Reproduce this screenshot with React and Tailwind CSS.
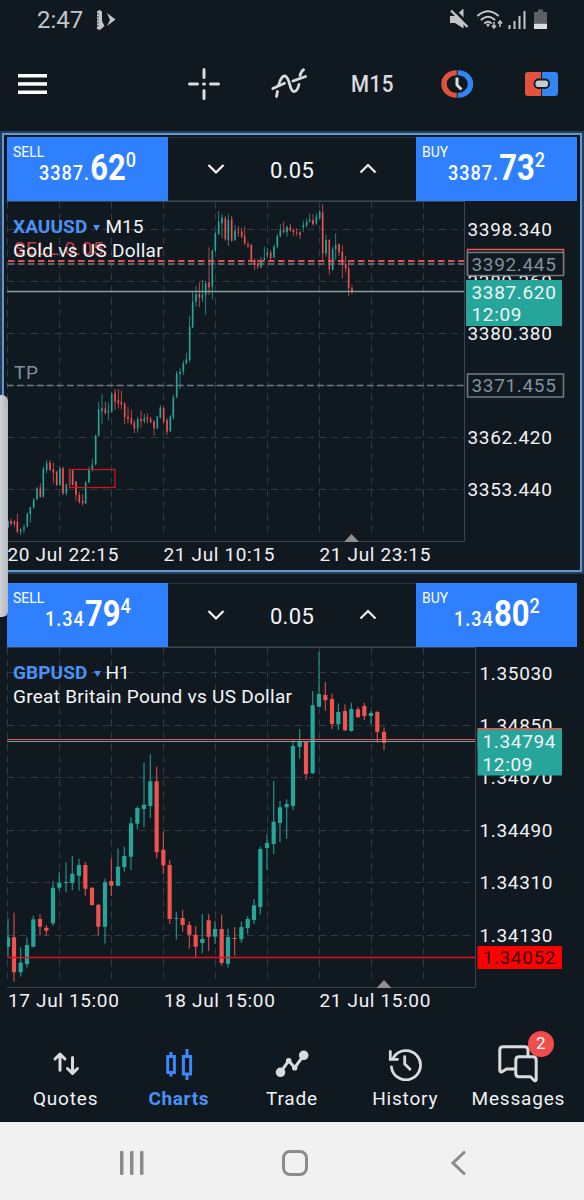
import React from 'react';

const UP = '#26a69a';
const DOWN = '#ef5350';

// Candle rows are [x, high, bodyTop, bodyBottom, low, direction], three units per pixel
const XAU_SEGMENTS = [
    {
        x: 0, y: 340,
        rows: [
            [24, 540, 543, 563, 563, 1], [33, 535, 543, 552, 557, 0], [43, 540, 545, 552, 560, 0], [52, 520, 546, 575, 580, 0],
            [62, 565, 568, 575, 585, 1], [72, 552, 562, 568, 580, 1], [82, 517, 522, 560, 562, 1], [91, 500, 502, 523, 548, 1],
            [101, 475, 478, 503, 506, 1], [111, 440, 445, 478, 480, 1], [121, 430, 443, 470, 474, 0], [130, 378, 387, 470, 472, 1],
            [140, 360, 370, 390, 400, 1], [150, 360, 368, 390, 393, 0], [160, 368, 388, 398, 430, 0], [170, 393, 395, 435, 438, 0],
            [180, 380, 386, 435, 437, 1], [189, 380, 385, 460, 465, 0], [199, 430, 435, 460, 466, 1], [209, 385, 390, 435, 438, 1],
            [218, 388, 392, 435, 437, 0], [228, 423, 425, 465, 482, 0], [238, 455, 465, 487, 490, 0], [248, 462, 483, 490, 497, 0],
            [257, 423, 428, 490, 492, 1], [267, 380, 390, 427, 430, 1], [277, 357, 375, 390, 395, 1], [287, 283, 287, 373, 376, 1],
            [296, 185, 208, 287, 290, 1], [306, 163, 205, 214, 253, 1], [316, 185, 205, 220, 223, 0], [325, 187, 214, 218, 240, 1],
            [335, 155, 162, 216, 218, 1], [345, 147, 160, 185, 210, 0], [355, 148, 180, 190, 205, 0], [364, 152, 185, 193, 208, 0],
            [374, 187, 190, 232, 252, 0], [384, 200, 230, 237, 250, 0], [394, 210, 235, 250, 255, 0], [403, 240, 248, 265, 280, 0],
            [413, 230, 238, 265, 278, 1], [423, 212, 237, 243, 262, 0], [433, 222, 235, 245, 250, 1], [442, 220, 232, 238, 250, 0],
            [452, 230, 237, 247, 250, 0], [462, 240, 245, 265, 287, 0], [472, 227, 230, 265, 267, 1], [481, 195, 203, 232, 236, 1],
            [491, 200, 205, 245, 250, 0], [501, 235, 240, 275, 285, 0], [511, 225, 230, 273, 276, 1], [520, 165, 172, 232, 240, 1],
            [530, 93, 100, 172, 174, 1], [540, 85, 95, 102, 147, 1], [550, 62, 70, 95, 105, 1], [559, 38, 58, 70, 73, 1],
        ],
    },
    {
        x: 160, y: 200,
        rows: [
            [89, 347, 380, 480, 487, 1], [98, 275, 305, 382, 384, 1], [108, 258, 283, 305, 320, 1], [118, 247, 282, 293, 322, 0],
            [127, 240, 285, 293, 305, 1], [137, 243, 250, 285, 345, 1], [147, 142, 247, 262, 285, 0], [157, 148, 152, 262, 298, 1],
            [166, 95, 100, 152, 155, 1], [176, 33, 65, 102, 105, 1], [186, 43, 53, 70, 115, 1], [196, 48, 55, 118, 122, 0],
            [205, 42, 60, 120, 138, 1], [215, 48, 58, 122, 125, 0], [225, 75, 92, 120, 123, 1], [235, 78, 95, 98, 110, 0],
            [245, 85, 95, 110, 115, 0], [254, 80, 108, 130, 135, 0], [264, 125, 133, 138, 145, 0], [274, 132, 135, 183, 188, 0],
            [284, 175, 180, 195, 210, 0], [293, 178, 192, 200, 207, 0], [303, 170, 185, 202, 205, 1], [313, 140, 175, 180, 183, 1],
            [322, 143, 157, 165, 175, 1], [332, 150, 158, 175, 180, 0], [342, 133, 140, 172, 175, 1], [352, 103, 108, 140, 145, 1],
            [361, 73, 88, 108, 112, 1], [371, 65, 90, 97, 100, 0], [381, 78, 80, 97, 110, 1], [391, 72, 82, 92, 95, 0],
            [400, 85, 90, 96, 108, 0], [410, 85, 97, 100, 108, 0], [420, 93, 97, 105, 117, 0], [430, 62, 75, 82, 95, 1],
            [440, 55, 65, 77, 82, 1], [449, 40, 58, 65, 67, 1], [459, 42, 60, 72, 78, 0], [469, 40, 50, 70, 75, 1],
            [479, 30, 35, 55, 58, 1], [488, 12, 37, 160, 180, 0], [498, 105, 120, 160, 170, 1], [508, 118, 120, 208, 225, 0],
            [518, 140, 148, 210, 212, 1], [527, 100, 135, 148, 180, 1], [537, 130, 132, 157, 168, 0], [547, 135, 155, 195, 235, 0],
            [557, 167, 192, 205, 218, 0], [566, 185, 205, 265, 288, 0], [576, 255, 265, 275, 283, 0],
        ],
    },
];

const GBP_SEGMENTS = [
    {
        x: 0, y: 740,
        rows: [
            [24, 535, 592, 620, 650, 1], [42, 518, 592, 697, 725, 0], [62, 622, 668, 697, 710, 1], [81, 592, 615, 672, 683, 1],
            [100, 527, 538, 620, 622, 1], [120, 523, 537, 560, 587, 0], [139, 555, 563, 572, 587, 0], [159, 423, 443, 550, 557, 1],
            [178, 397, 429, 443, 452, 1], [198, 368, 426, 429, 457, 1], [217, 347, 401, 429, 450, 1], [237, 357, 375, 407, 452, 1],
            [256, 366, 375, 446, 467, 0], [276, 441, 443, 495, 497, 0], [295, 492, 494, 560, 587, 0], [315, 416, 427, 560, 611, 1],
            [334, 355, 423, 437, 468, 0], [354, 326, 380, 437, 439, 1], [373, 320, 348, 381, 395, 1], [393, 232, 250, 350, 390, 1],
            [412, 199, 204, 251, 268, 1], [432, 68, 194, 207, 261, 1], [451, 43, 124, 198, 234, 1], [470, 80, 124, 337, 355, 0],
            [490, 275, 329, 376, 402, 0], [509, 360, 375, 537, 551, 0], [529, 515, 533, 536, 599, 1], [548, 510, 534, 555, 575, 0],
            [568, 545, 555, 584, 626, 0], [587, 558, 584, 620, 651, 0], [607, 522, 597, 609, 640, 1], [626, 522, 541, 590, 633, 0],
            [645, 543, 567, 590, 612, 1], [665, 524, 567, 669, 677, 0], [684, 566, 591, 671, 683, 1], [704, 561, 594, 597, 647, 0],
        ],
    },
    {
        x: 220, y: 640,
        rows: [
            [64, 845, 861, 898, 908, 1], [83, 829, 837, 864, 882, 1], [102, 778, 796, 840, 852, 1], [121, 620, 627, 801, 823, 1],
            [141, 583, 609, 624, 690, 1], [161, 423, 545, 612, 642, 1], [180, 483, 502, 549, 606, 1], [200, 478, 492, 502, 597, 1],
            [219, 301, 318, 498, 510, 1], [239, 267, 305, 321, 356, 1], [258, 303, 305, 402, 419, 0], [278, 153, 196, 400, 402, 1],
            [297, 35, 162, 200, 201, 1], [316, 126, 165, 181, 212, 0], [336, 161, 177, 252, 267, 0], [355, 190, 216, 253, 270, 1],
            [375, 193, 213, 271, 273, 0], [394, 188, 207, 273, 275, 1], [414, 201, 208, 232, 233, 0], [433, 188, 198, 228, 240, 0],
            [453, 213, 219, 228, 252, 1], [472, 212, 216, 276, 308, 0], [492, 262, 275, 308, 331, 0],
        ],
    },
];

const GRID_X = [7.5, 59.5, 111.5, 163.5, 215.5, 267.5, 319.5, 371.5, 423.5];

const Candles = ({ segments, bodyWidth, wickWidth }) => (
    <g>
        {segments.map((s) =>
            s.rows.map(([x, high, top, bottom, low, up]) => {
                const cx = s.x + x / 3;
                const color = up ? UP : DOWN;
                return (
                    <g key={cx} fill={color}>
                        <rect x={cx - wickWidth / 2} y={s.y + high / 3} width={wickWidth} height={(low - high) / 3} opacity="0.85" />
                        <rect x={cx - bodyWidth / 2} y={s.y + top / 3} width={bodyWidth} height={Math.max((bottom - top) / 3, 1)} rx={bodyWidth > 2 ? 0.5 : 0} />
                    </g>
                );
            })
        )}
    </g>
);

const Grid = ({ top, bottom, right, rows }) => (
    <g fill="none" strokeWidth="1">
        <g stroke="#323b44" strokeDasharray="7 5">
            {GRID_X.map((x) => <line key={x} x1={x} x2={x} y1={top} y2={bottom - 5} />)}
            {rows.map((y) => <line key={y} x1="7" x2={right} y1={y} y2={y} />)}
        </g>
        <path d={`M6 ${top}H${right}V${bottom}H7`} stroke="#3b444e" />
    </g>
);

const AxisText = ({ x, y, fill = '#f1f3f5', children }) => (
    <text x={x} y={y} fill={fill} fontSize="19" letterSpacing="0.65">{children}</text>
);

const TitleOverlay = ({ symbol, timeframe, name }) => (
    <div className="absolute left-[7px] top-[14px] text-[19px] leading-6 tracking-[0.28px] text-[#f4f6f8]">
        <div className="flex items-center">
            <span className="font-bold tracking-[0.1px] text-[#4a92f5]">{symbol}</span>
            <svg width="7" height="7" viewBox="0 0 7 7" className="ml-[6px] mr-[5px]"><path d="M0 1h7L3.500 7z" fill="#4a92f5" /></svg>
            <span className="tracking-normal">{timeframe}</span>
        </div>
        <div>{name}</div>
    </div>
);

const PriceButton = ({ side, small, big, sup }) => (
    <button className="relative flex h-[64px] w-[161px] items-start justify-center bg-[#2f80ff] text-white">
        <span className="absolute left-[6px] top-[7px] origin-left scale-x-[0.9] text-[15.500px] leading-4">{side}</span>
        <span className="flex scale-x-[0.86] items-baseline pt-[8px] font-medium leading-[46px]">
            <span className="text-[21px] tracking-[1.2px]">{small}</span>
            <span className="text-[36px] font-bold leading-[46px]">{big}</span>
            <span className="relative -top-[13px] text-[21px]">{sup}</span>
        </span>
    </button>
);

const Chevron = ({ up }) => (
    <svg width="18" height="12" viewBox="0 0 18 12" fill="none" stroke="#f4f6f8" strokeWidth="2.2">
        <path d={up ? 'M1.500 9.500L9 2L16.500 9.500' : 'M1.500 2L9 9.500L16.500 2'} />
    </svg>
);

const TradeRow = ({ sell, buy }) => (
    <div className="flex h-[64px] justify-between px-px">
        <PriceButton side="SELL" {...sell} />
        <div className="flex flex-1 items-center justify-between border-y border-[#2a333d] px-[39px] text-[22px] tracking-[0.3px] text-[#f4f6f8]">
            <Chevron />
            <span className="pt-[3px]">0.05</span>
            <Chevron up />
        </div>
        <PriceButton side="BUY" {...buy} />
    </div>
);

const GoldChart = () => (
    <div className="relative">
        <svg width="572" height="368" viewBox="6 201 572 368" className="block">
            <Grid top={201.5} bottom={541.5} right={464.5} rows={[229.5, 281.5, 333.5, 385.5, 437.5, 489.5]} />
            <line x1="7" x2="464" y1="385.5" y2="385.5" stroke="#727a82" strokeWidth="1.5" strokeDasharray="6.500 3.500" />
            <Candles segments={XAU_SEGMENTS} bodyWidth={1.6} wickWidth={0.9} />
            <rect x="69.500" y="469.500" width="45.500" height="18" fill="none" stroke="#d8141b" strokeWidth="1.200" />
            <line x1="8" x2="464" y1="260.900" y2="260.900" stroke="#e04f52" strokeWidth="2" strokeDasharray="6.500 3.500" />
            <line x1="8" x2="464" y1="264" y2="264" stroke="#727a82" strokeWidth="1.500" strokeDasharray="6.500 3.500" />
            <line x1="7" x2="464" y1="291.500" y2="291.500" stroke="#7fa39f" strokeWidth="1.300" />
            <AxisText x="14" y="379" fill="#84909d">TP</AxisText>
            <AxisText x="14" y="254.500" fill="#c23d43">SELL 0.05</AxisText>
            <path d="M344 542L351.500 534L359 542z" fill="#8d8f92" />

            <AxisText x="467.500" y="236">3398.340</AxisText>
            <AxisText x="467.500" y="288">3389.360</AxisText>
            <AxisText x="467.500" y="340">3380.380</AxisText>
            <AxisText x="467.500" y="443.500">3362.420</AxisText>
            <AxisText x="467.500" y="495.500">3353.440</AxisText>

            <rect x="467.500" y="249.500" width="96" height="24" fill="#101820" stroke="#ef5350" strokeWidth="1.500" />
            <rect x="467.500" y="252.500" width="96" height="23" fill="#101820" stroke="#727a82" strokeWidth="1.500" />
            <AxisText x="471.500" y="270.500" fill="#84909d">3392.445</AxisText>
            <rect x="466" y="280" width="96" height="46" fill={UP} />
            <AxisText x="471.500" y="298.500">3387.620</AxisText>
            <AxisText x="471.500" y="321">12:09</AxisText>
            <rect x="467.500" y="374" width="96" height="23" fill="#101820" stroke="#727a82" strokeWidth="1.500" />
            <AxisText x="471.500" y="392" fill="#84909d">3371.455</AxisText>

            <AxisText x="7.500" y="561">20 Jul 22:15</AxisText>
            <AxisText x="163.500" y="561">21 Jul 10:15</AxisText>
            <AxisText x="319.500" y="561">21 Jul 23:15</AxisText>
        </svg>
        <TitleOverlay symbol="XAUUSD" timeframe="M15" name="Gold vs US Dollar" />
    </div>
);

const PoundChart = () => (
    <div className="relative">
        <svg width="572" height="365" viewBox="6 647 572 365" className="block">
            <Grid top={647.5} bottom={987.5} right={475.5} rows={[672.5, 725.5, 777.5, 830.5, 882.5, 935.5]} />
            <clipPath id="pound-plot"><rect x="7" y="647" width="468" height="340" /></clipPath>
            <g clipPath="url(#pound-plot)">
                <Candles segments={GBP_SEGMENTS} bodyWidth={4.2} wickWidth={1.2} />
            </g>
            <line x1="7" x2="475" y1="739.500" y2="739.500" stroke="#ef5350" strokeWidth="1.200" />
            <line x1="7" x2="475" y1="741.500" y2="741.500" stroke="#7fa39f" strokeWidth="1.200" />
            <line x1="7" x2="475" y1="957.500" y2="957.500" stroke="#e8101a" strokeWidth="1.300" />
            <path d="M376.500 988L384 980L391.500 988z" fill="#8d8f92" />

            <AxisText x="479.500" y="679.500">1.35030</AxisText>
            <AxisText x="479.500" y="731.500">1.34850</AxisText>
            <AxisText x="479.500" y="784">1.34670</AxisText>
            <AxisText x="479.500" y="836.500">1.34490</AxisText>
            <AxisText x="479.500" y="889">1.34310</AxisText>
            <AxisText x="479.500" y="941.500">1.34130</AxisText>

            <rect x="477.500" y="728" width="84.500" height="20" fill={DOWN} />
            <rect x="477.500" y="729.500" width="84.500" height="46" fill={UP} />
            <AxisText x="482.500" y="748">1.34794</AxisText>
            <AxisText x="482.500" y="770.500">12:09</AxisText>
            <rect x="477.500" y="946" width="84.500" height="23" fill="#ff0000" />
            <AxisText x="482.500" y="964" fill="#3c0a0c">1.34052</AxisText>

            <AxisText x="8" y="1007">17 Jul 15:00</AxisText>
            <AxisText x="164" y="1007">18 Jul 15:00</AxisText>
            <AxisText x="319.500" y="1007">21 Jul 15:00</AxisText>
        </svg>
        <TitleOverlay symbol="GBPUSD" timeframe="H1" name="Great Britain Pound vs US Dollar" />
    </div>
);

const StatusBar = () => (
    <div className="flex h-[40px] items-center justify-between pl-[37px] pr-[37px] text-[#c3c6c9]">
        <div className="flex items-center gap-[13px]">
            <span className="text-[24px] leading-10">2:47</span>
            <svg width="20" height="22" viewBox="0 0 20 22" fill="#c3c6c9">
                <path d="M1 3Q3.500 -1 6 3V12L8.500 17L4 21L1 20z" />
                <path d="M11 4L19.500 10.500L11 17L14 11z" />
                <path d="M2 4v14" stroke="#101820" strokeWidth="1" strokeDasharray="1.500 1.500" />
            </svg>
        </div>
        <svg width="97" height="22" viewBox="0 0 97 22" fill="none" stroke="#c3c6c9" strokeWidth="2">
            <path d="M0 7h5l8.500-7.500V19.500L5 14H0z" fill="#c3c6c9" stroke="none" />
            <path d="M3 -.5L19 16.500" stroke="#101820" strokeWidth="3" />
            <path d="M1 1.500L17.500 18" strokeWidth="2.400" />
            <g strokeLinecap="round">
                <path d="M28 6.500Q38 -2 48 6.500" />
                <path d="M31.500 10.500Q38 5 44.500 10.500" />
                <path d="M35 14Q38 11.500 41 14" />
            </g>
            <circle cx="38" cy="16" r="1.500" fill="#c3c6c9" stroke="none" />
            <path d="M44 13v5.500M42 16.500l2 2.500l2-2.500M50 18v-5.500M48 14.500l2-2.500l2 2.500" strokeWidth="1.500" />
            <path d="M59.500 20v-4M64.500 20v-8M69.500 20V7M74.500 20V2" />
            <path d="M88 .5h5V3h4V14H84V3h4z" fill="#5b6066" stroke="none" />
            <rect x="84" y="14.500" width="13" height="5.500" fill="#dcdee0" stroke="none" />
        </svg>
    </div>
);

const Toolbar = () => (
    <div className="flex h-[91px] items-center justify-between pb-[3px] pl-[18px]">
        <svg width="29" height="20" viewBox="0 0 29 20" fill="#ffffff">
            <rect width="29" height="3.500" /><rect y="8.200" width="29" height="3.500" /><rect y="16.500" width="29" height="3.500" />
        </svg>
        <div className="grid w-[422px] grid-cols-5 place-items-center">
            <svg width="34" height="34" viewBox="0 0 34 34" fill="none" stroke="#d9dbdd" strokeWidth="3" strokeLinecap="round">
                <path d="M17 2.500v8M17 23.500v8M2.500 17h8M23.500 17h8" />
                <path d="M16.500 17h1" />
            </svg>
            <svg width="36" height="32" viewBox="0 0 36 32" fill="none" stroke="#d9dbdd" strokeWidth="2.800" strokeLinecap="round">
                <path d="M5.500 28.500L6.500 23.500" />
                <path d="M7.500 17.500C9 11 12 6.500 15 8.500C19 11.500 18.500 22 22.500 23.500C25 24 27 20.500 28 16.500" />
                <path d="M29 7.500C30 4.500 31 2.500 32.500 1.800" />
                <path d="M1.800 20.500L13.500 15.200M22 13L34.500 8.500" />
            </svg>
            <span className="origin-center scale-x-[0.84] text-[24.500px] font-medium leading-8 tracking-[0.6px] text-[#d9dbdd]">M15</span>
            <svg width="34" height="30" viewBox="0 0 34 30" fill="none">
                <path d="M16 2A14 13 0 0 0 16 28V24.500A10 9.500 0 0 1 16 5.500z" fill="#e2523f" stroke="#e2523f" strokeWidth="1.500" />
                <path d="M18.500 2A14 13 0 0 1 18.500 28V24.500A10 9.500 0 0 0 18.500 5.500z" fill="#3485f4" stroke="#3485f4" strokeWidth="1.500" />
                <path d="M17 8.500V16L21.500 20.500" stroke="#d9dbdd" strokeWidth="3" />
            </svg>
            <svg width="33" height="24" viewBox="0 0 33 24">
                <path d="M3 0H16V24H3Q0 24 0 21V3Q0 0 3 0z" fill="#e2523f" />
                <path d="M17 0H30Q33 0 33 3V21Q33 24 30 24H17z" fill="#3485f4" />
                <rect x="9.500" y="7.500" width="14.500" height="8.500" rx="4" fill="#c3cbd2" stroke="#101820" strokeWidth="1.800" />
            </svg>
        </div>
    </div>
);

const QuotesIcon = () => (
    <svg width="34" height="34" viewBox="0 0 34 34" fill="none" stroke="#d9dbdd" strokeWidth="3" strokeLinecap="round" strokeLinejoin="round">
        <path d="M11 23.200V8M6 12L11 7L16 12M23.500 10.500V26M18.500 21.500L23.500 26.500L28.500 21.500" />
    </svg>
);

const ChartsIcon = () => (
    <svg width="34" height="34" viewBox="0 0 34 34" fill="none" stroke="#3f86f6" strokeWidth="3">
        <path d="M5.700 9.500h6.700v16H5.700zM9 9V5M9 26v3.500M21.400 9.500h7.200v17.500H21.400zM25 9V2M25 27v6" />
    </svg>
);

const TradeIcon = () => (
    <svg width="34" height="34" viewBox="0 0 34 34" fill="#d9dbdd" stroke="#d9dbdd" strokeWidth="3">
        <path d="M5.500 25.300L13.700 13.700L19.700 20.700L28.700 8.300" fill="none" />
        <circle cx="5.500" cy="25.300" r="3.300" /><circle cx="28.700" cy="8.300" r="3.300" />
        <circle cx="13.700" cy="13.700" r="1.300" /><circle cx="19.700" cy="20.700" r="1.300" />
    </svg>
);

const HistoryIcon = () => (
    <svg width="34" height="34" viewBox="0 0 34 34" fill="none" stroke="#d9dbdd" strokeWidth="2.800" strokeLinecap="round">
        <path d="M5.500 10.500A14.600 14.600 0 1 1 3.400 19.800" />
        <path d="M2.300 4.500V12.300H9.500M16.700 9.700V17L22 22.300" />
    </svg>
);

const MessagesIcon = () => (
    <svg width="40" height="38" viewBox="0 0 40 38" fill="none" stroke="#d9dbdd" strokeWidth="3" strokeLinejoin="round">
        <path d="M17 24H8.500L4 26.800Q1.800 27.500 1.800 25V5Q1.800 1.800 5 1.800H26.800Q30 1.800 30 5V11" />
        <path d="M21 11.800H35Q38.200 11.800 38.200 15V34Q38.200 36.800 36 35.200L32.500 31.700H21Q17.800 31.700 17.800 28.500V15Q17.800 11.800 21 11.800z" />
    </svg>
);

const TABS = [
    { label: 'Quotes', Icon: QuotesIcon },
    { label: 'Charts', Icon: ChartsIcon, active: true },
    { label: 'Trade', Icon: TradeIcon },
    { label: 'History', Icon: HistoryIcon },
    { label: 'Messages', Icon: MessagesIcon, badge: 2 },
];

const TabBar = () => (
    <div className="grid h-[110px] grid-cols-5 px-[9px] pt-[33px]">
        {TABS.map(({ label, Icon, active, badge }) => (
            <div key={label} className="relative flex flex-col items-center">
                <div className="flex h-[38px] items-center"><Icon /></div>
                <span className={`mt-[4px] text-[19px] leading-6 ${active ? 'font-bold tracking-[0.65px] text-[#4a92f5]' : 'tracking-[0.8px] text-[#f1f3f5]'}`}>
                    {label}
                </span>
                {badge && (
                    <span className="absolute -top-[14px] left-[66px] flex h-[26px] w-[26px] items-center justify-center rounded-full bg-[#f04c4c] text-[17px] text-white">
                        {badge}
                    </span>
                )}
            </div>
        ))}
    </div>
);

const SystemNav = () => (
    <div className="flex h-[78px] items-center bg-[#f1f1f1] pb-[4px] pl-[120px] pt-[8px]">
        <svg width="24" height="24" viewBox="0 0 24 24" fill="#8b8b8b">
            <rect width="3.500" height="24" rx="1" /><rect x="10" width="3.500" height="24" rx="1" /><rect x="20" width="3.500" height="24" rx="1" />
        </svg>
        <svg width="26" height="26" viewBox="0 0 26 26" fill="none" stroke="#8b8b8b" strokeWidth="3" className="ml-[138px]">
            <rect x="1.500" y="1.500" width="23" height="23" rx="6.500" />
        </svg>
        <svg width="15" height="24" viewBox="0 0 15 24" fill="none" stroke="#8b8b8b" strokeWidth="3" strokeLinecap="round" className="ml-[143px]">
            <path d="M13 1.500L2 12L13 22.500" />
        </svg>
    </div>
);

const App = () => (
    <div className="relative h-[1200px] w-[584px] overflow-hidden bg-[#101820] font-['Roboto',sans-serif]">
        <StatusBar />
        <Toolbar />
        <div className="h-[443px] border-2 border-[#223d5e]">
            <div className="h-full border-2 border-[#6796cc] px-[2px] pt-[2px]">
                <TradeRow sell={{ small: '3387.', big: '62', sup: '0' }} buy={{ small: '3387.', big: '73', sup: '2' }} />
                <GoldChart />
            </div>
        </div>
        <div className="h-[438px] px-[6px] pt-[9px]">
            <TradeRow sell={{ small: '1.34', big: '79', sup: '4' }} buy={{ small: '1.34', big: '80', sup: '2' }} />
            <PoundChart />
        </div>
        <TabBar />
        <SystemNav />

        {/* edge panel handle */}
        <div className="absolute left-0 top-[395px] h-[222px] w-[8px] rounded-r-[6px] bg-linear-to-r from-[#cfd2d6] to-[#b3b8be]"></div>
    </div>
);

export default App;
